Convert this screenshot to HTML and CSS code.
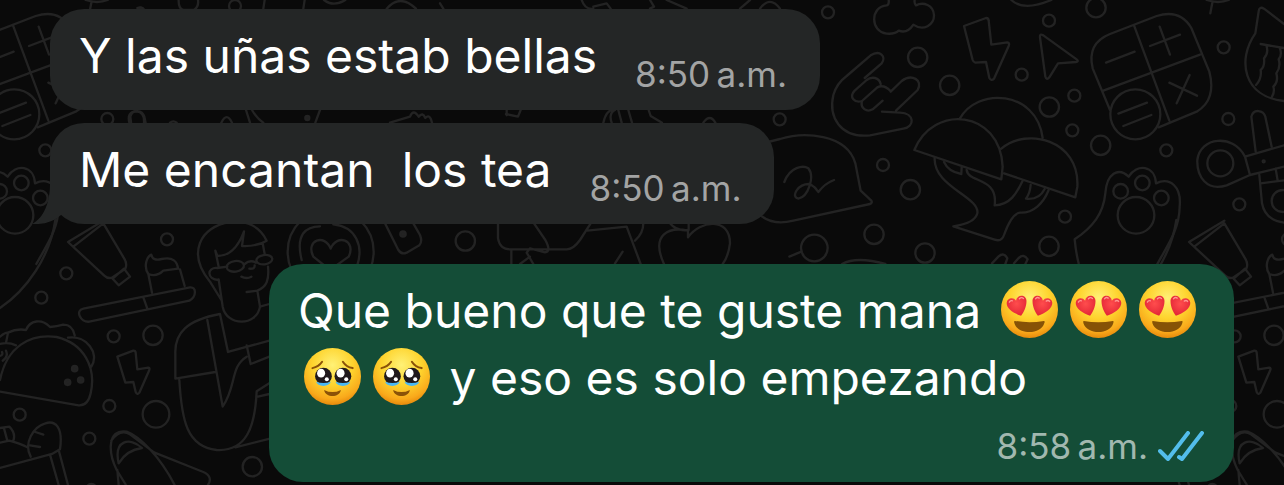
FILE: index.html
```html
<!DOCTYPE html>
<html lang="es">
<head>
  <meta charset="UTF-8">
  <meta name="viewport" content="width=device-width, initial-scale=1">
  <title>Chat</title>
  <link rel="stylesheet" href="styles.css">
</head>
<body>

  <!-- doodle wallpaper, one tile repeated sideways every 1121px -->
  <svg class="wallpaper" aria-hidden="true">
    <defs>
      <g id="tile">
        <g transform="translate(820 0) scale(.33333)">
          <!-- cloud, horns hand -->
          <path d="M206 0Q208 14 200 16C150 20 150 95 200 101Q225 103 236 92Q262 102 280 74C310 95 343 75 342 45C340 15 310 5 288 16Q282 10 284 0"/>
          <path d="M134 234L185 190C200 170 180 148 152 166L80 228Q50 250 40 285C25 350 60 415 150 406L250 386C285 380 285 340 240 338L186 335M228 332L293 270C310 240 275 220 245 243L212 275M182 252C178 232 155 228 140 240L104 272C85 292 105 310 126 303L172 262Q192 252 212 274M126 303C120 325 140 338 158 328L188 302"/>
          <!-- bolt, pointer -->
          <path d="M432 78L498 54Q506 54 506 62L514 134L562 127Q570 128 566 138L522 236Q514 244 508 234L498 186L466 188Q460 186 458 180Z"/>
          <path d="M660 112Q658 100 670 106L770 178Q778 184 768 186L714 190L688 232Q680 242 676 230Z"/>
          <!-- calculator -->
          <path d="M870 330L818 205Q800 130 870 102L1010 48Q1080 26 1114 84L1168 215Q1190 300 1130 335L1016 382M942 76L1048 362M850 272L1140 164M858 188L944 155M990 138L1080 104M1019 80L1050 164M1048 248L1131 287M1109 225L1070 310M895 341L981 308M910 378L994 345"/>
          <circle cx="946" cy="343" r="75"/>
          <!-- mushrooms -->
          <path d="M418 358C470 260 650 270 668 414M283 450C340 310 540 330 548 500L544 538ZM544 446C620 380 780 420 772 560L766 592L552 520"/>
          <path d="M344 474C340 560 480 590 472 640Q465 670 400 679L524 719Q545 726 552 705Q575 640 600 638C640 640 670 610 686 570M372 486Q385 515 424 522L425 502M440 510C445 550 535 530 524 616C570 615 590 580 608 542M632 555Q630 580 618 596C650 600 665 585 674 567"/>
          <!-- cap -->
          <path d="M-236 446L-120 417C-50 395 80 400 106 490L122 572L154 602Q158 608 150 612L-80 662Q-150 680 -190 635M-107 546C-90 500 -50 495 -35 505C-15 530 -35 590 -65 596C-90 590 -65 550 -30 552Q-15 560 -5 576Q15 550 42 540"/>
          <!-- paw -->
          <path d="M776 790Q768 760 764 718C820 680 850 640 856 580C860 520 895 500 926 530C950 490 1005 495 1008 550C1050 530 1085 560 1079 620C1078 690 1040 740 1012 792"/>
          <circle cx="948" cy="646" r="55"/><circle cx="902" cy="574" r="22"/><circle cx="967" cy="549" r="22"/><circle cx="1024" cy="594" r="22"/>
          <!-- whistle and knife -->
          <path d="M1290 525L1220 556C1160 575 1130 530 1132 480C1140 410 1240 400 1275 470L1392 436M1275 470L1290 525L1392 500M1307 455L1294 350C1300 325 1330 330 1336 350L1355 440M1318 525L1326 610Q1335 660 1392 668M1322 550L1392 541M1367 506L1373 542"/>
          <circle cx="1201" cy="490" r="39"/><circle cx="1388" cy="603" r="33"/><circle cx="1331" cy="484" r="3"/>
          <!-- melon -->
          <path d="M1392 72L1332 26Q1318 18 1316 34L1306 100C1250 180 1270 290 1392 303M1322 132L1392 144M1340 140Q1346 160 1332 175Q1335 200 1322 210Q1326 235 1308 255M1380 146Q1387 165 1376 178Q1383 200 1369 220Q1376 245 1360 260Q1365 275 1356 290"/>
          <path d="M574 0Q610 35 694 0M1171 40L1177 8M1160 0Q1195 12 1226 0"/>
          <circle cx="24" cy="37" r="18"/><circle cx="293" cy="172" r="29"/><circle cx="389" cy="256" r="29"/><circle cx="687" cy="62" r="18"/><circle cx="828" cy="23" r="29"/><circle cx="605" cy="224" r="18"/><circle cx="763" cy="287" r="18"/><circle cx="688" cy="321" r="29"/><circle cx="757" cy="391" r="18"/><circle cx="842" cy="436" r="29"/><circle cx="1039" cy="451" r="18"/><circle cx="1211" cy="142" r="18"/><circle cx="1225" cy="357" r="18"/><circle cx="1258" cy="613" r="18"/><circle cx="189" cy="495" r="18"/><circle cx="271" cy="569" r="29"/><circle cx="162" cy="703" r="29"/><circle cx="315" cy="759" r="29"/><circle cx="735" cy="650" r="18"/><circle cx="687" cy="739" r="29"/><circle cx="-17" cy="744" r="40"/>
          <path d="M-92 770L-56 755M66 792Q110 768 196 792M516 790L535 770Q552 755 562 775L556 792M582 790L596 774Q612 760 623 778L616 792"/>
        </g>
        <g transform="translate(0 200) scale(.33333)">
          <path d="M166 60C150 170 80 270 0 324"/>
          <!-- toothpaste and brush -->
          <path d="M310 62L204 126L312 226Q324 238 338 232L376 206Q382 192 374 178L310 70L220 140M338 236L372 206L390 230L356 256Z"/>
          <path d="M250 326L570 262C590 260 590 290 568 302L268 365C240 368 225 330 250 326ZM430 292L442 326M456 278L445 222M554 258L540 208M445 222C430 200 440 170 454 164Q458 184 485 177C520 170 532 185 534 206L490 212Q470 232 445 222"/>
          <!-- taco -->
          <path d="M0 575L236 616Q264 618 272 580C290 500 250 430 170 411C90 400 20 440 0 540M0 410Q16 396 24 398Q50 385 78 390C90 360 125 355 150 381Q170 380 190 374Q218 374 224 406M24 398L18 428M0 432Q25 425 48 436M204 413C260 405 300 460 274 500M0 468Q10 465 6 456M8 482Q26 470 18 452"/>
          <circle cx="224" cy="506" r="8" class="dot"/><circle cx="203" cy="547" r="8" class="dot"/><circle cx="242" cy="540" r="8" class="dot"/>
          <!-- small bolt -->
          <path d="M352 470L400 452Q406 451 407 458L412 508L445 503Q451 504 447 512L418 578Q412 586 407 576L400 546L376 548Z"/>
          <!-- grocery bag -->
          <path d="M0 804L156 762L180 748C190 680 165 660 136 670C100 680 70 730 92 770M150 764L176 855M176 750L204 855M0 728L28 722Q60 730 82 742M0 684L28 680Q48 700 40 722M12 685L22 722M106 696L130 704M90 736L120 741"/>
          <!-- shoe -->
          <path d="M524 855C480 770 420 710 380 695C320 685 325 760 350 810L378 855M334 722Q360 685 390 703L462 757L610 816Q640 830 624 855M356 790C340 720 390 710 426 744Q380 750 356 790M352 810L356 855"/>
          <circle cx="501" cy="118" r="18"/><circle cx="199" cy="220" r="18"/><circle cx="124" cy="293" r="18"/><circle cx="341" cy="409" r="18"/><circle cx="459" cy="406" r="29"/><circle cx="328" cy="618" r="18"/><circle cx="468" cy="643" r="40"/><circle cx="59" cy="644" r="18"/><circle cx="268" cy="716" r="18"/><circle cx="757" cy="800" r="29"/><circle cx="274" cy="868" r="16"/>
          <!-- man with glasses -->
          <path d="M664 300L630 245C560 160 600 80 690 66C740 60 780 80 800 122Q770 140 726 138L732 94C715 140 690 168 652 168L646 152L656 200M788 130L794 162M656 238L668 320C680 380 770 380 780 320L772 272L740 276M772 272C800 260 808 240 804 200M655 240C620 240 620 200 652 204L682 200M724 230Q740 238 754 230M734 192Q750 178 768 188M748 206Q765 208 764 196"/>
          <ellipse cx="706" cy="199" rx="26" ry="16" transform="rotate(-8 706 199)"/><ellipse cx="793" cy="179" rx="24" ry="14" transform="rotate(-8 793 179)"/>
          <path d="M660 342C560 360 524 400 526 460V536L646 516M622 360L668 620C710 560 690 500 740 470M660 342L684 456L808 422M538 540C545 660 560 740 650 750C740 755 765 680 770 574L810 548M780 320L808 312M740 436L752 492L808 470M774 590L808 582M706 742L810 716"/>
        </g>
      </g>
    </defs>
    <use href="#tile"/>
    <use href="#tile" x="-1121"/>
    <use href="#tile" x="1121"/>
    <g transform="scale(.33333)">
      <path d="M536 0Q535 26 550 30H582Q597 20 594 0M794 0L790 26M914 0L910 26M972 0Q1000 22 1036 0M1160 26Q1200 -20 1248 26M412 24Q420 20 428 24M388 368Q380 334 410 334Q434 336 432 368M510 368Q520 360 530 368M664 368Q680 335 696 368M738 330L750 368M756 330Q770 355 790 368M960 330L946 368M1170 368L1230 350Q1240 325 1256 350Q1268 335 1276 354Q1290 340 1296 368"/>
      <path d="M1320 10L1330 26M1520 346V330M1518 342L1554 350L1562 330M1810 368Q1820 325 1845 330M1835 368Q1825 340 1845 330M1855 330L1865 368M1885 330L1896 368M1946 330L1952 348L1986 368M2110 368Q2130 340 2146 368M1745 0Q1755 30 1780 26M1780 20L1820 10L1832 26M1950 0L1962 20L1950 26M2000 0L2060 26M2220 26L2250 0M2280 26Q2310 -15 2340 26"/>
      <circle cx="705" cy="18" r="18"/><circle cx="922" cy="354" r="6" class="dot"/><circle cx="2339" cy="358" r="18"/>
      <!-- heart token, tag -->
      <circle cx="992" cy="755" r="129"/>
      <path d="M905 780C885 700 920 680 960 679M1000 673C1070 680 1090 740 1072 795M992 746C975 700 915 720 940 770L990 810L1046 770C1070 720 1010 700 992 746M1155 670L1195 750Q1205 765 1220 758L1258 736Q1268 725 1260 705L1240 670"/>
      <circle cx="1209" cy="702" r="8" class="dot"/><circle cx="1396" cy="723" r="29"/>
      <path d="M1494 670V715Q1500 750 1535 748H1700Q1720 748 1740 720L1772 670M1602 670L1636 720Q1655 755 1635 757L1590 745L1580 758L1600 792M1534 750V792M1560 792L1590 770M1762 692L1880 680L1922 792M1845 790L1868 755M1930 670Q1930 700 1905 722M1992 792C1950 700 2010 680 2064 692V712C2100 660 2190 650 2190 730Q2185 770 2168 792M2010 670Q2030 695 2066 690V670"/>
    </g>
  </svg>

  <svg class="defs" aria-hidden="true">
    <defs>
      <radialGradient id="skin" cx="50%" cy="30%" r="70%">
        <stop offset="0" stop-color="#fff176"/>
        <stop offset=".5" stop-color="#fed42e"/>
        <stop offset=".85" stop-color="#f9a91b"/>
        <stop offset="1" stop-color="#e78a0c"/>
      </radialGradient>
      <radialGradient id="love" cx="50%" cy="40%" r="60%">
        <stop offset="0" stop-color="#ff4d4d"/>
        <stop offset="1" stop-color="#e32636"/>
      </radialGradient>
      <symbol id="heart-eyes" viewBox="0 0 170 170">
        <circle cx="85" cy="85" r="85" fill="url(#skin)"/>
        <path d="M60 104C38 96 16 82 17 65C18 50 38 47 45 59C48 38 76 39 76 60C76 78 68 93 60 104Z" fill="url(#love)"/>
        <path d="M110 104C132 96 154 82 153 65C152 50 132 47 125 59C122 38 94 39 94 60C94 78 102 93 110 104Z" fill="url(#love)"/>
        <path d="M25 63Q28 57 34 59M55 53Q61 47 67 52M103 53Q107 47 114 51M135 60Q141 56 145 61" fill="none" stroke="#ff9a94" stroke-width="4" stroke-linecap="round"/>
        <path d="M41 119Q85 127 128 119Q132 119 129 126C120 161 50 161 40 126Q38 119 41 119Z" fill="#865206"/>
      </symbol>
      <symbol id="tears" viewBox="0 0 170 170">
        <circle cx="85" cy="85" r="85" fill="url(#skin)"/>
        <path d="M25 60Q44 56 54 41M116 41Q126 57 145 60" fill="none" stroke="#8b5208" stroke-width="6" stroke-linecap="round"/>
        <circle cx="58" cy="84" r="25" fill="#20191d"/><circle cx="116" cy="84" r="25" fill="#20191d"/>
        <path d="M36 101Q58 108 80 101Q75 113 58 113Q40 113 36 101ZM94 101Q116 108 138 101Q134 113 116 113Q98 113 94 101Z" fill="#4ab8f5"/>
        <ellipse cx="51" cy="75" rx="12" ry="13" fill="#fff"/><ellipse cx="109" cy="75" rx="12" ry="13" fill="#fff"/>
        <circle cx="68" cy="93" r="6" fill="#fff"/><circle cx="126" cy="93" r="6" fill="#fff"/>
        <path d="M60 125Q85 138 110 125C106 149 64 149 60 125Z" fill="#8b5208"/>
      </symbol>
    </defs>
  </svg>

  <main class="chat">
    <div class="bubble in">
      <p class="text">Y las uñas estab bellas</p>
      <time class="time" datetime="08:50">8:50&#8201;a.m.</time>
    </div>

    <div class="bubble in last">
      <p class="text">Me encantan  los tea</p>
      <time class="time" datetime="08:50">8:50&#8201;a.m.</time>
      <svg class="tail" viewBox="0 0 30 40" aria-hidden="true"><path d="M18 0C18 18 12 34 0 40Q18 41 29 31V0Z"/></svg>
    </div>

    <div class="bubble out">
      <p class="text">Que bueno que te guste mana <svg class="emoji" role="img" aria-label="😍"><use href="#heart-eyes"/></svg><svg class="emoji" role="img" aria-label="😍"><use href="#heart-eyes"/></svg><svg class="emoji" role="img" aria-label="😍"><use href="#heart-eyes"/></svg><svg class="emoji" role="img" aria-label="🥹"><use href="#tears"/></svg><svg class="emoji" role="img" aria-label="🥹"><use href="#tears"/></svg> y eso es solo empezando</p>
      <div class="meta">
        <time class="time" datetime="08:58">8:58&#8201;a.m.</time>
        <svg class="ticks" viewBox="0 0 46 30" role="img" aria-label="Leído"><path d="M2 20L10 28L30 2M21 26L24 28L44 2"/></svg>
      </div>
    </div>
  </main>

</body>
</html>
```
FILE: styles.css
```css
body {
  margin: 0;
  background: #0a0a0a;
  color: #fff;
  font-family: Inter, "Liberation Sans", sans-serif;
}

/* background */
.wallpaper {
  position: absolute;
  top: 0;
  left: 0;
  width: 100%;
  height: 100%;
  z-index: -1;
  fill: none;
  stroke: #232323;
  stroke-width: 7;
  stroke-linecap: round;
  stroke-linejoin: round;
}

.wallpaper .dot {
  fill: #232323;
}

.defs {
  position: absolute;
  width: 0;
  height: 0;
}

/* messages */
.chat {
  display: flex;
  flex-direction: column;
  padding: 9px 50px 3px;
}

.bubble {
  position: relative;
  border-radius: 34px;
  padding: 13px 33px 15px 29px;
}

.in {
  display: flex;
  align-items: flex-end;
  align-self: flex-start;
  gap: 38px;
  margin-bottom: 13px;
  background: #242626;
}

.in .text {
  margin-bottom: 6px;
}

.last {
  margin-bottom: 40px;
}

.tail {
  position: absolute;
  left: -18px;
  bottom: 0;
  width: 30px;
  height: 40px;
  fill: #242626;
}

.out {
  align-self: flex-end;
  max-width: 916px;
  padding-right: 20px;
  background: #144d37;
}

.text {
  margin: 0;
  font-size: 48px;
  line-height: 67px;
  white-space: pre-wrap;
}

.emoji {
  width: 57px;
  height: 57px;
  margin: 0 6px;
  vertical-align: -10px;
}

.meta {
  display: flex;
  justify-content: flex-end;
  align-items: center;
  gap: 10px;
  margin: 14px 10px 0 0;
}

.time {
  font-size: 35px;
  line-height: 42px;
  color: #a3a4a4;
}

.out .time {
  color: #a1b8af;
}

.ticks {
  width: 46px;
  height: 30px;
  fill: none;
  stroke: #53bdeb;
  stroke-width: 4;
  stroke-linecap: round;
  stroke-linejoin: round;
}
```
